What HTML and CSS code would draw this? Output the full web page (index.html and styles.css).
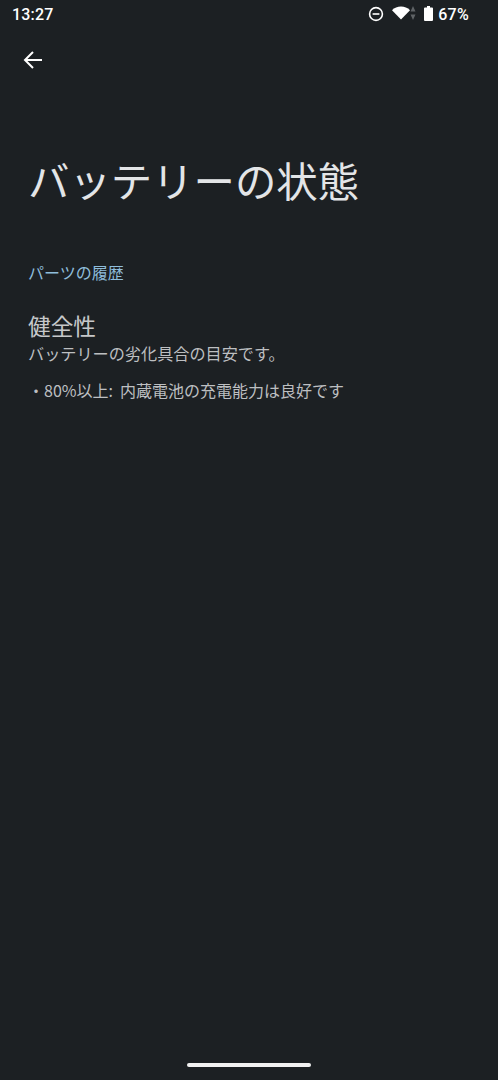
FILE: index.html
```html
<!DOCTYPE html>
<html lang="ja">
<head>
<meta charset="utf-8">
<title>バッテリーの状態</title>
<link rel="stylesheet" href="styles.css">
</head>
<body>
<div class="screen">
  <header class="status">
    <span class="time">13:27</span>
    <div class="status-icons">
      <svg class="ic-dnd" viewBox="0 0 16 16"><circle cx="8" cy="8" r="6.4" fill="none" stroke="#fff" stroke-width="1.6"/><rect x="4.6" y="7.2" width="6.8" height="1.6" fill="#fff"/></svg>
      <svg class="ic-wifi" viewBox="0 0 18 14"><path d="M0 4.2C2.4 1.8 5.5.6 9 .6s6.600 1.200 9 3.600L9 13.600z" fill="#fff"/></svg>
      <svg class="ic-data" viewBox="0 0 6 14"><path d="M3 0L5.500 5.500H.5zM3 14L.5 8.500h5z" fill="#5f6366"/></svg>
      <svg class="ic-batt" viewBox="0 0 9 15"><path d="M3 0h3v1.500h2a1 1 0 0 1 1 1V14a1 1 0 0 1-1 1H1a1 1 0 0 1-1-1V2.500a1 1 0 0 1 1-1h2z" fill="#fff"/></svg>
      <span class="pct">67%</span>
    </div>
  </header>
  <div class="toolbar">
    <svg class="back" viewBox="0 0 20 20"><path d="M19 10H2.500M10 2L2 10l8 8" fill="none" stroke="#fff" stroke-width="2"/></svg>
  </div>
  <main class="content">
    <h1 class="title">バッテリーの状態</h1>
    <h2 class="category">パーツの履歴</h2>
    <section class="pref">
      <h3 class="pref-title">健全性</h3>
      <p class="pref-desc">バッテリーの劣化具合の目安です。</p>
      <p class="pref-note">・80%以上: 内蔵電池の充電能力は良好です</p>
    </section>
  </main>
  <div class="nav"><span class="handle"></span></div>
</div>
</body>
</html>
```

FILE: styles.css
```css
* { box-sizing: border-box; }
html, body { margin: 0; padding: 0; }
body {
  background: #1c2023;
  font-family: "Noto Sans CJK JP", sans-serif;
  color: #e8eaed;
}
.screen {
  width: 498px;
  height: 1080px;
  display: flex;
  flex-direction: column;
  overflow: hidden;
}
.status {
  height: 28px;
  padding: 0 29px 0 12px;
  display: flex;
  align-items: center;
  justify-content: space-between;
  color: #fff;
  font-family: Roboto, sans-serif;
}
.time { font-size: 16px; font-weight: 500; letter-spacing: .2px; }
.status-icons { display: flex; align-items: center; }
.ic-dnd { width: 16px; height: 16px; margin-right: 8px; }
.ic-wifi { width: 18px; height: 14px; margin-top: -2px; }
.ic-data { width: 6px; height: 14px; margin-right: 8px; margin-top: -2px; }
.ic-batt { width: 9px; height: 15px; margin-right: 5px; margin-top: -1px; }
.pct { font-size: 16px; font-weight: 500; letter-spacing: .3px; }
.toolbar {
  height: 64px;
  padding: 0 0 0 23px;
  display: flex;
  align-items: center;
}
.back { width: 20px; height: 20px; }
.content { flex: 1; padding: 0 28px; }
.title {
  margin: 57px 0 0;
  font-size: 41.400px;
  line-height: 60px;
  font-weight: 400;
  color: #e3e5e7;
}
.category {
  margin: 51px 0 0;
  font-size: 16px;
  line-height: 24px;
  font-weight: 400;
  color: #8fbddb;
}
.pref { margin-top: 28px; }
.pref-title {
  margin: 0;
  font-size: 22.700px;
  line-height: 28px;
  font-weight: 400;
  color: #c6c8ca;
}
.pref-desc {
  margin: 1px 0 0;
  font-size: 16.150px;
  line-height: 24px;
  color: #bdbfc1;
}
.pref-note {
  margin: 13px 0 0;
  font-size: 16px;
  line-height: 24px;
  color: #bdbfc1;
  word-spacing: 3.500px;
}
.nav {
  height: 30px;
  display: flex;
  justify-content: center;
  padding-top: 13px;
}
.handle {
  width: 124px;
  height: 4px;
  border-radius: 2px;
  background: #f1f1f1;
}
```
